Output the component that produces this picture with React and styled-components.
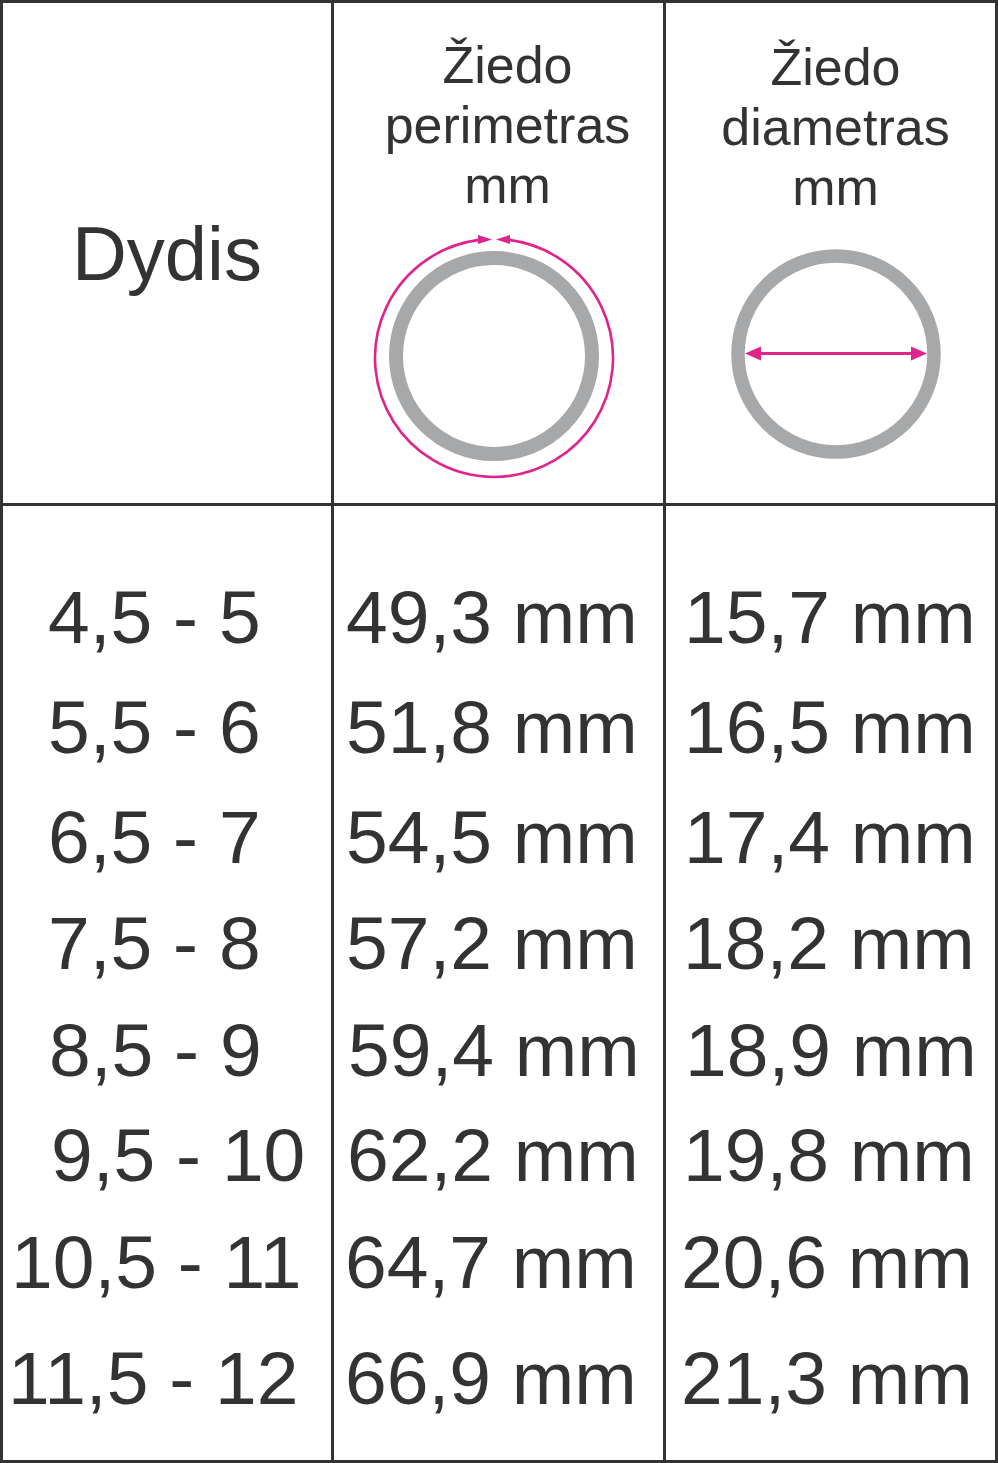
import React from "react"
import styled, { createGlobalStyle } from "styled-components"

const ink = "#333333"
const ringGray = "#a7a8aa"
const magenta = "#e0248c"
const sans = `"Liberation Sans", Arial, Helvetica, sans-serif`

const GlobalStyle = createGlobalStyle`
  html, body {
    margin: 0;
    padding: 0;
    background: #ffffff;
  }
  body {
    font-family: ${sans};
    color: ${ink};
  }
`

const Frame = styled.div`
  width: 998px;
  height: 1463px;
  box-sizing: border-box;
  padding: 3px;
  background: ${ink};
  display: grid;
  grid-template-rows: 500px 954px;
  row-gap: 3px;
`

const Section = styled.div`
  display: grid;
  grid-template-columns: 328px 329px 329px;
  column-gap: 3px;
`

const HeaderCell = styled.div`
  background: #ffffff;
  display: flex;
  flex-direction: column;
  align-items: center;
  justify-content: ${(p) => (p.$center ? "center" : "flex-start")};
  padding-top: ${(p) => p.$top || 0}px;
  box-sizing: border-box;
`

const SizeTitle = styled.div`
  font-family: ${sans};
  font-size: 76px;
  line-height: normal;
  color: ${ink};
`

const ColumnTitle = styled.div`
  font-family: ${sans};
  font-size: 52px;
  line-height: 60px;
  text-align: center;
  color: ${ink};
  padding-left: ${(p) => p.$shift || 0}px;
`

const RingIcon = styled.svg`
  display: block;
  margin-top: ${(p) => p.$mt || 0}px;
  margin-left: ${(p) => p.$ml || 0}px;
  margin-right: ${(p) => p.$mr || 0}px;
`

const BodyColumn = styled.div`
  background: #ffffff;
  padding-top: 57px;
  display: flex;
  flex-direction: column;
`

const Cell = styled.div`
  font-family: ${sans};
  height: ${(p) => p.$h}px;
  line-height: 108px;
  font-size: 75px;
  white-space: pre;
  color: ${ink};
  padding-left: ${(p) => p.$indent}px;
`

const rows = [
  { size: "4,5 - 5", per: "49,3 mm", dia: "15,7 mm", h: 110, ind: [45, 12, 18] },
  { size: "5,5 - 6", per: "51,8 mm", dia: "16,5 mm", h: 110, ind: [45, 12, 18] },
  { size: "6,5 - 7", per: "54,5 mm", dia: "17,4 mm", h: 106, ind: [45, 12, 18] },
  { size: "7,5 - 8", per: "57,2 mm", dia: "18,2 mm", h: 107, ind: [45, 12, 17] },
  { size: "8,5 - 9", per: "59,4 mm", dia: "18,9 mm", h: 105, ind: [46, 14, 19] },
  { size: "9,5 - 10", per: "62,2 mm", dia: "19,8 mm", h: 107, ind: [48, 13, 17] },
  { size: "10,5 - 11", per: "64,7 mm", dia: "20,6 mm", h: 116, ind: [8, 11, 15] },
  { size: "11,5 - 12", per: "66,9 mm", dia: "21,3 mm", h: 108, ind: [5, 11, 15] },
]

function PerimeterRing() {
  return (
    <RingIcon width="250" height="250" viewBox="0 0 250 250" $mt={17} $mr={10}>
      <circle cx="125" cy="124" r="98" fill="none" stroke={ringGray} strokeWidth="14" />
      <path
        d="M 140 7.9 A 119 119 0 1 1 110 7.9"
        fill="none"
        stroke={magenta}
        strokeWidth="2.6"
      />
      <polygon points="123,7.5 109,3 109,12" fill={magenta} />
      <polygon points="127,7.5 141,3 141,12" fill={magenta} />
    </RingIcon>
  )
}

function DiameterRing() {
  return (
    <RingIcon width="230" height="230" viewBox="0 0 230 230" $mt={22} $ml={10}>
      <circle cx="115" cy="115" r="98" fill="none" stroke={ringGray} strokeWidth="13.5" />
      <line x1="34" y1="114.5" x2="196" y2="114.5" stroke={magenta} strokeWidth="3" />
      <polygon points="24,114.5 40,107.5 40,121.5" fill={magenta} />
      <polygon points="206,114.5 190,107.5 190,121.5" fill={magenta} />
    </RingIcon>
  )
}

export default function App() {
  return (
    <>
      <GlobalStyle />
      <Frame>
        <Section>
          <HeaderCell $center>
            <SizeTitle>Dydis</SizeTitle>
          </HeaderCell>
          <HeaderCell $top={32}>
            <ColumnTitle $shift={18}>
              Žiedo
              <br />
              perimetras
              <br />
              mm
            </ColumnTitle>
            <PerimeterRing />
          </HeaderCell>
          <HeaderCell $top={34}>
            <ColumnTitle $shift={10}>
              Žiedo
              <br />
              diametras
              <br />
              mm
            </ColumnTitle>
            <DiameterRing />
          </HeaderCell>
        </Section>

        <Section>
          <BodyColumn>
            {rows.map((r) => (
              <Cell key={r.size} $h={r.h} $indent={r.ind[0]}>
                {r.size}
              </Cell>
            ))}
          </BodyColumn>
          <BodyColumn>
            {rows.map((r) => (
              <Cell key={r.per} $h={r.h} $indent={r.ind[1]}>
                {r.per}
              </Cell>
            ))}
          </BodyColumn>
          <BodyColumn>
            {rows.map((r) => (
              <Cell key={r.dia} $h={r.h} $indent={r.ind[2]}>
                {r.dia}
              </Cell>
            ))}
          </BodyColumn>
        </Section>
      </Frame>
    </>
  )
}
